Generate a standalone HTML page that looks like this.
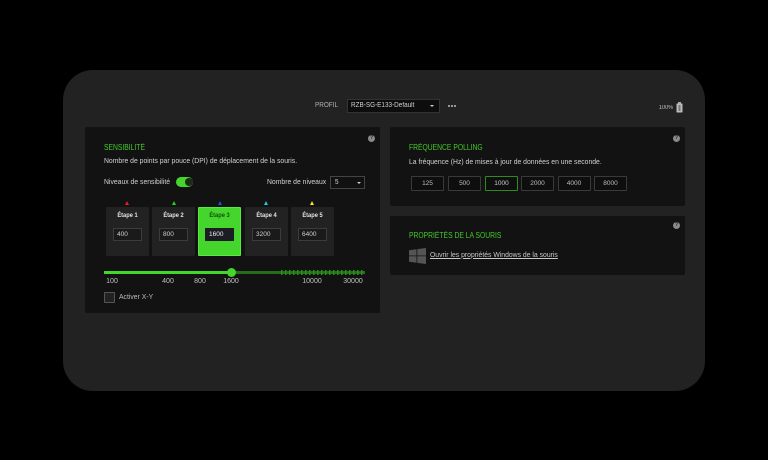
<!DOCTYPE html>
<html><head><meta charset="utf-8">
<style>
html,body{margin:0;padding:0;background:#000}
#r{position:relative;width:768px;height:460px;overflow:hidden;background:#000;font-family:"Liberation Sans",sans-serif;color:#d2d2d2;font-size:7.5px;filter:blur(.35px)}
#r div{position:absolute;box-sizing:border-box;white-space:nowrap}
.t{line-height:10px;transform:scaleX(.91);transform-origin:0 50%}
.main{left:63px;top:70px;width:642px;height:321px;background:#222;border-radius:30px}
.p{background:#121212;border-radius:2px}
.h{color:#44c82c;font-size:8px;line-height:10px;transform:scaleX(.845);transform-origin:0 50%}
.q{width:7px;height:7px;border-radius:50%;background:#8a8a8a;color:#222;font-size:5px;line-height:7px;text-align:center;font-weight:bold}
.card{top:207px;width:43px;height:49px;background:#222;border-radius:1px}
.card.a{background:#44d62c;border:1px solid #5be843;}
.lbl{top:211px;width:43px;text-align:center;font-size:6.5px;font-weight:bold;color:#e4e4e4;line-height:10px;transform:scaleX(.88)}
.in{top:228px;width:29px;height:13px;border:1px solid #3c3c3c;background:#1a1a1a;font-size:6.5px;line-height:12px;padding-left:3px;color:#d0d0d0}
.tri{top:201px;width:0;height:0;border-left:2.5px solid transparent;border-right:2.5px solid transparent;border-bottom:4px solid}
.tk{top:277px;font-size:7px;line-height:10px;color:#c0c0c0;transform:translateX(-50%)}
.b{top:175.5px;width:33px;height:15px;border:1px solid #3a3a3a;background:#0e0e0e;text-align:center;font-size:6.5px;line-height:13px;color:#bdbdbd;border-radius:1px}
</style></head><body>
<div id="r">
<div class="main"></div>

<div class="t" style="left:315px;top:101px;font-size:7px;color:#b0b0b0">PROFIL</div>
<div style="left:347px;top:99px;width:93px;height:14px;background:#0d0d0d;border:1px solid #333"></div>
<div class="t" style="left:351px;top:101px;font-size:7px;color:#d0d0d0">RZB-SG-E133-Default</div>
<div style="left:430px;top:105px;width:0;height:0;border-left:2.5px solid transparent;border-right:2.5px solid transparent;border-top:2.5px solid #ccc"></div>
<div style="left:448px;top:105px;width:2px;height:2px;background:#bbb;box-shadow:3px 0 #bbb,6px 0 #bbb;border-radius:50%"></div>
<div class="t" style="left:659px;top:103px;font-size:6px;color:#c0c0c0">100%</div>
<svg style="position:absolute;left:676px;top:102px" width="7" height="11" viewBox="0 0 7 11"><rect x="2" y="0" width="3" height="1.5" fill="#aaa"/><rect x=".5" y="1.5" width="6" height="9" rx=".6" fill="#bbb"/><rect x="2.5" y="3" width="2" height="6" fill="#777"/></svg>

<!-- left panel -->
<div class="p" style="left:85px;top:127px;width:295px;height:186px"></div>
<div class="q" style="left:368px;top:135px">?</div>
<div class="h" style="left:104px;top:142.5px">SENSIBILITÉ</div>
<div class="t" style="left:104px;top:156px">Nombre de points par pouce (DPI) de déplacement de la souris.</div>
<div class="t" style="left:104px;top:177px">Niveaux de sensibilité</div>
<div style="left:176px;top:177px;width:17px;height:10px;border-radius:5px;background:#44d62c"></div>
<div style="left:184.5px;top:178px;width:8px;height:8px;border-radius:50%;background:#1c2a18"></div>
<div class="t" style="left:267px;top:177px">Nombre de niveaux</div>
<div style="left:330px;top:176px;width:35px;height:13px;border:1px solid #444;background:#111"></div>
<div class="t" style="left:335px;top:177.5px;font-size:7px">5</div>
<div style="left:357px;top:181.5px;width:0;height:0;border-left:2px solid transparent;border-right:2px solid transparent;border-top:2.5px solid #ccc"></div>

<div class="tri" style="left:125px;border-bottom-color:#e81c1c"></div>
<div class="tri" style="left:171.5px;border-bottom-color:#1ed41e"></div>
<div class="tri" style="left:217.5px;border-bottom-color:#1e50d8"></div>
<div class="tri" style="left:264px;border-bottom-color:#1ec8e0"></div>
<div class="tri" style="left:310px;border-bottom-color:#f0e81c"></div>

<div class="card" style="left:106px"></div>
<div class="card" style="left:152px"></div>
<div class="card a" style="left:198px"></div>
<div class="card" style="left:245px"></div>
<div class="card" style="left:291px"></div>
<div class="lbl" style="left:106px">Étape 1</div>
<div class="lbl" style="left:152px">Étape 2</div>
<div class="lbl" style="left:198px;color:#14500c">Étape 3</div>
<div class="lbl" style="left:245px">Étape 4</div>
<div class="lbl" style="left:291px">Étape 5</div>
<div class="in" style="left:113px">400</div>
<div class="in" style="left:159px">800</div>
<div class="in" style="left:205px;background:#1c1c24;border-color:#1c1c24;color:#eee">1600</div>
<div class="in" style="left:252px">3200</div>
<div class="in" style="left:298px">6400</div>

<div style="left:104px;top:271px;width:127px;height:3px;background:#44d62c"></div>
<div style="left:231px;top:271px;width:134px;height:3px;background:#256d1a"></div>
<div style="left:281px;top:270px;width:84px;height:5px;background:repeating-linear-gradient(90deg,#2f8a20 0,#2f8a20 1.5px,transparent 1.5px,transparent 4px)"></div>
<div style="left:226.5px;top:267.5px;width:9px;height:9px;border-radius:50%;background:#44d62c"></div>
<div class="tk" style="left:112px">100</div>
<div class="tk" style="left:168px">400</div>
<div class="tk" style="left:200px">800</div>
<div class="tk" style="left:231px">1600</div>
<div class="tk" style="left:312px">10000</div>
<div class="tk" style="left:353px">30000</div>
<div style="left:104px;top:291.5px;width:11px;height:11px;border:1px solid #555;background:#222;border-radius:1px"></div>
<div class="t" style="left:118.5px;top:291.5px;color:#bdbdbd">Activer X-Y</div>

<!-- polling -->
<div class="p" style="left:390px;top:127px;width:295px;height:79px"></div>
<div class="q" style="left:673px;top:135px">?</div>
<div class="h" style="left:409px;top:143px">FRÉQUENCE POLLING</div>
<div class="t" style="left:409px;top:157px">La fréquence (Hz) de mises à jour de données en une seconde.</div>
<div class="b" style="left:411px">125</div>
<div class="b" style="left:448px">500</div>
<div class="b" style="left:485px;border-color:#2f8a20;color:#ccc">1000</div>
<div class="b" style="left:521px">2000</div>
<div class="b" style="left:557.5px">4000</div>
<div class="b" style="left:594px">8000</div>

<!-- props -->
<div class="p" style="left:390px;top:216px;width:295px;height:59px"></div>
<div class="q" style="left:673px;top:222px">?</div>
<div class="h" style="left:409px;top:231px">PROPRIÉTÉS DE LA SOURIS</div>
<svg style="position:absolute;left:409px;top:248px" width="17" height="16" viewBox="0 0 17 16"><path d="M0 2.3 7.5 1.2V7.5H0ZM8.3 1.1 17 0V7.5H8.3ZM0 8.3H7.5V14.8L0 13.7ZM8.3 8.3H17V16L8.3 14.9Z" fill="#555"/></svg>
<div class="t" style="left:430px;top:250px;text-decoration:underline;color:#c8c8c8">Ouvrir les propriétés Windows de la souris</div>
</div>
</body></html>
